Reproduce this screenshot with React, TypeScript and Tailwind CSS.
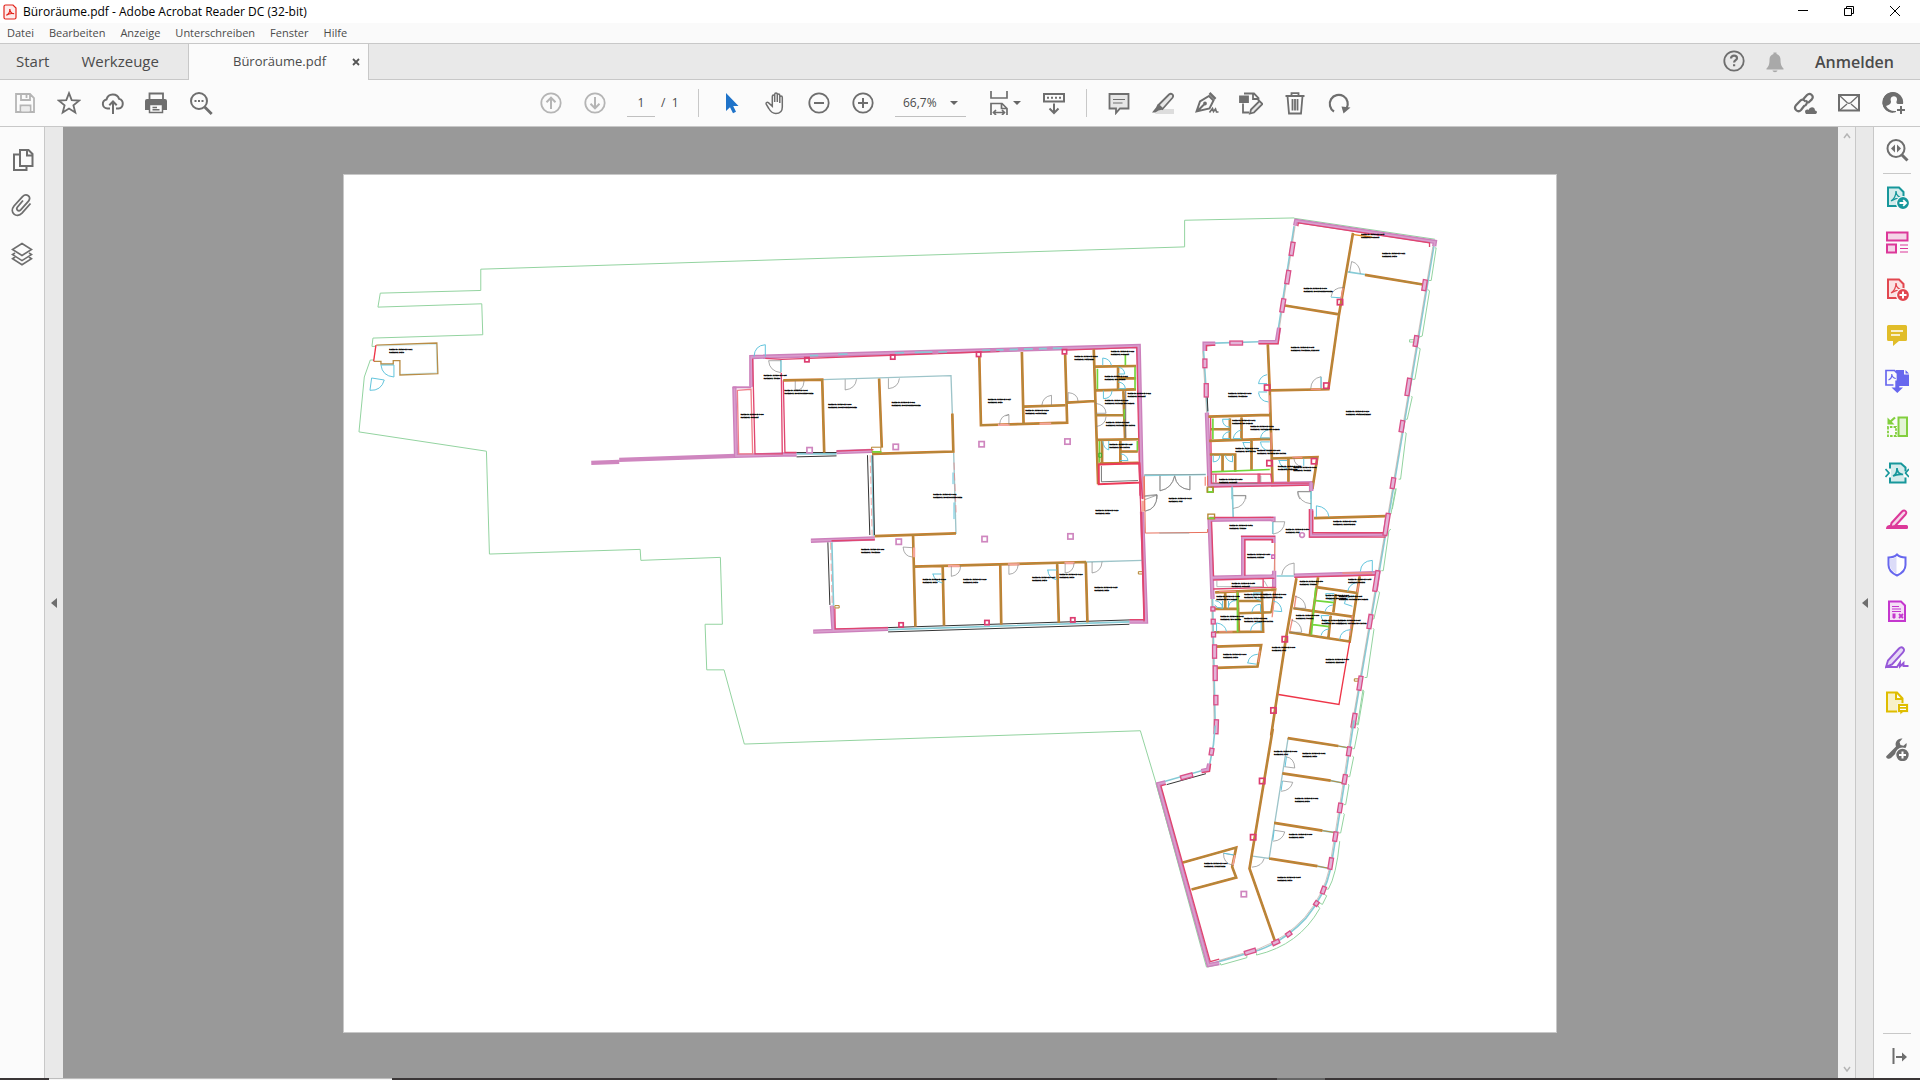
import React from "react";

type IconProps = { children: React.ReactNode; className?: string };
const Icon: React.FC<IconProps> = ({ children, className = "text-[#6e6e6e]" }) => (
  <svg viewBox="0 0 24 24" className={`h-6 w-6 shrink-0 ${className}`} fill="none" stroke="currentColor" strokeWidth="1.8" aria-hidden="true">{children}</svg>
);

type ToolProps = { label: string; children: React.ReactNode; className?: string };
const Tool: React.FC<ToolProps> = ({ label, children, className = "w-11" }) => (
  <button type="button" aria-label={label} className={`flex h-full shrink-0 items-center justify-center ${className}`}>{children}</button>
);

const SideTool: React.FC<ToolProps> = ({ label, children }) => (
  <button type="button" aria-label={label} className="flex h-[46px] w-full shrink-0 items-center justify-center">{children}</button>
);

const swoosh = "M6 16c3-2 5-6 5-10c0 4 3 7 7 7c-5-.5-8 .5-12 3z";

const menus = ["Datei", "Bearbeiten", "Anzeige", "Unterschreiben", "Fenster", "Hilfe"];

const TitleBar = () => (
  <header className="flex h-[23px] shrink-0 items-center bg-white text-black">
    <svg viewBox="0 0 14 16" className="ml-[3px] h-4 w-3.5" aria-hidden="true">
      <path d="M2.500 1h7.500l3 3v9.500a1.500 1.500 0 0 1-1.500 1.500h-9a1.500 1.500 0 0 1-1.500-1.500v-11a1.500 1.500 0 0 1 1.500-1.500z" fill="#fdecec" stroke="#e2231a" strokeWidth="1.200" />
      <path d="M3.300 11.300c2-.8 3.700-3.600 3.500-6.300c.2 2.700 2 4.700 4.300 4.700c-3-.6-5.500 0-7.800 1.600z" fill="none" stroke="#e2231a" strokeWidth="1.200" />
    </svg>
    <h1 className="ml-1.5 text-[12px] leading-4">Büroräume.pdf - Adobe Acrobat Reader DC (32-bit)</h1>
    <div className="ml-auto flex h-full pr-0.5">
      <Tool label="Minimieren" className="w-[46px]"><svg className="h-3 w-3" viewBox="0 0 12 12" stroke="#000"><path d="M1 4.500h10" /></svg></Tool>
      <Tool label="Wiederherstellen" className="w-[46px]"><svg className="h-3 w-3" viewBox="0 0 12 12" stroke="#000" fill="none"><path d="M1.500 2.500h7v7h-7zM3.500 2V.5h7v7H9" /></svg></Tool>
      <Tool label="Schließen" className="w-[46px]"><svg className="h-3 w-3" viewBox="0 0 12 12" stroke="#000"><path d="M1 0l10 10M11 0L1 10" /></svg></Tool>
    </div>
  </header>
);

const TabBar = () => (
  <div className="flex h-[37px] shrink-0 border-t border-[#c8c8c8] bg-[#e9e9e9] text-[#4b4b4b]">
    <div className="flex w-[188px] items-center gap-8 border-b border-[#c8c8c8] pl-4 text-[15px]">
      <button type="button">Start</button>
      <button type="button">Werkzeuge</button>
    </div>
    <div className="flex w-[181px] items-center border-x border-[#c8c8c8] bg-[#fbfbfb] pl-11 text-[13px]">
      <span>Büroräume.pdf</span>
      <button type="button" aria-label="Tab schließen" className="ml-auto mr-2">
        <svg viewBox="0 0 8 8" className="h-2 w-2" stroke="#555" strokeWidth="1.800"><path d="M1 1l6 6M7 1L1 7" /></svg>
      </button>
    </div>
    <div className="flex flex-1 items-center justify-end border-b border-[#c8c8c8] pr-[26px]">
      <button type="button" aria-label="Hilfe">
        <Icon><circle cx="12" cy="11" r="9.700" /><path d="M9 8.600c0-4 6-3.600 6-.4c0 2-2.900 2-2.900 4.300M12.100 14.200v2" strokeWidth="2.200" /></Icon>
      </button>
      <button type="button" aria-label="Benachrichtigungen" className="ml-[17px]">
        <Icon className="text-[#a9a9a9]"><path fill="currentColor" stroke="none" d="M10.500 2.500h3v1.500c3 .9 4 3 4 5.500c0 5 1 7 3 9v1h-17v-1c2-2 3-4 3-9c0-2.500 1-4.600 4-5.500zM9.500 20.500h5c-.5 2.300-4.500 2.300-5 0z" /></Icon>
      </button>
      <button type="button" className="ml-7 text-[16px] font-semibold">Anmelden</button>
    </div>
  </div>
);

const Toolbar = () => (
  <div className="flex h-[47px] shrink-0 items-center border-b border-[#c8c8c8] bg-[#fbfbfb] text-[#4b4b4b]">
    <div className="flex h-full w-[529px] shrink-0 pl-[3px]">
      <Tool label="Speichern"><Icon className="text-[#b5b5b5]"><path d="M3 3h14l4 4v14H3zM8 3v6h9V3M13.500 4v3M7.500 21v-6.500h10V21" /><path d="M8.500 15.500h8v5h-8z" fill="#ececec" stroke="none" /></Icon></Tool>
      <Tool label="Favorit"><Icon><path d="M12 2.200l2.700 6.900 7.400.5-5.700 4.700 1.900 7.300L12 17.600l-6.300 4 1.900-7.300-5.700-4.700 7.400-.5z" /></Icon></Tool>
      <Tool label="Hochladen"><Icon><path d="M9 17.500H6.500a4.600 4.600 0 0 1-1-9.100a6.600 6.600 0 0 1 12.600-.5a4.900 4.900 0 0 1-.6 9.600H15M12 23V11M8.300 14.200L12 10.500l3.700 3.700" strokeWidth="2" /></Icon></Tool>
      <Tool label="Drucken"><Icon><path d="M4.500 8.500V2.500h13.500v6" /><path d="M2 8h18a2 2 0 0 1 2 2v9h-4v-5H4v5H0v-9a2 2 0 0 1 2-2z" fill="currentColor" stroke="none" /><path d="M4.500 13.500h13v8h-13zM7.500 16.500h4.500M7.500 18.800h7" strokeWidth="1.500" /></Icon></Tool>
      <Tool label="Suchen"><Icon><circle cx="10" cy="10" r="8" strokeWidth="2" /><path d="M15.700 16l7 7" strokeWidth="2.800" /><path d="M5.500 10h2M9 10h2M12.500 10h2" strokeWidth="2" /></Icon></Tool>
    </div>
    <Tool label="Vorherige Seite"><Icon className="text-[#b5b5b5]"><circle cx="12" cy="12" r="9.700" /><path d="M12 18V7M7.500 11.200L12 6.700l4.500 4.500" strokeWidth="2" /></Icon></Tool>
    <Tool label="Nächste Seite"><Icon className="text-[#b5b5b5]"><circle cx="12" cy="12" r="9.700" /><path d="M12 6v11M7.500 12.800l4.500 4.500 4.500-4.500" strokeWidth="2" /></Icon></Tool>
    <input aria-label="Seite" defaultValue="1" className="ml-2.5 h-7 w-7 border-b border-[#c0c0c0] bg-transparent text-center text-[12px]" />
    <span className="ml-1.5 w-5 whitespace-nowrap text-[12px]">/&nbsp; 1</span>
    <div className="ml-[17px] mr-2.5 h-7 w-px bg-[#c8c8c8]" />
    <Tool label="Auswahl"><Icon className="text-[#1f73c9]"><path d="M7 2v18l4-3.800 3 6 3-1.500-2.800-5.700H19.500z" fill="currentColor" stroke="none" /></Icon></Tool>
    <Tool label="Hand"><Icon><path d="M8.300 13V5.500c0-2 2.400-2 2.400 0V11V3.500c0-2 2.600-2 2.600 0V11V4.500c0-2 2.500-2 2.500 0V12V6.500c0-2 2.500-2 2.500 0V16c0 4.500-2.500 6.500-6.500 6.500c-4 0-5.300-2-7-5l-2.600-4.300c-.6-1.200.8-2.400 2.200-1.500l3.900 3.600z" strokeWidth="1.500" transform="translate(1 0)" /></Icon></Tool>
    <Tool label="Verkleinern"><Icon><circle cx="12" cy="12" r="9.700" /><path d="M7 12h10" strokeWidth="2" /></Icon></Tool>
    <Tool label="Vergrößern"><Icon><circle cx="12" cy="12" r="9.700" /><path d="M7 12h10M12 7v10" strokeWidth="2" /></Icon></Tool>
    <div className="ml-2.5 flex h-7 w-[71px] items-center border-b border-[#c0c0c0]">
      <select aria-label="Zoom" className="flex-1 appearance-none bg-transparent pl-2 text-[12px]"><option>66,7%</option></select>
      <svg viewBox="0 0 8 4" className="mr-2 h-1 w-2" fill="#666"><path d="M0 0h8L4 4z" /></svg>
    </div>
    <Tool label="Seitenanzeige" className="ml-5 w-9">
      <Icon><path d="M4 0v7h16V0M4 24V12.500h11l5 5V24M14.500 12.500v5H20M7 21.500h10M9 19l-2.500 2.500L9 24M15 19l2.500 2.500L15 24" strokeWidth="1.700" /></Icon>
      <svg viewBox="0 0 8 4" className="ml-0.5 h-1 w-2" fill="#666"><path d="M0 0h8L4 4z" /></svg>
    </Tool>
    <Tool label="Tastatur" className="ml-2.5 w-11"><Icon><path d="M2 3h20v7.500H2zM5 6.800h2M9 6.800h2M13 6.800h2M17 6.800h2M12 12.500v9M7.500 17.500L12 22l4.500-4.500" strokeWidth="2" /></Icon></Tool>
    <div className="mx-2.5 h-7 w-px bg-[#c8c8c8]" />
    <Tool label="Kommentar"><Icon><path d="M2.500 3h19v14.500H13L9 22v-4.500H2.500z" fill="#e6e6e6" /><path d="M6 8.500h12M6 12h9.500" strokeWidth="1.200" /></Icon></Tool>
    <Tool label="Markieren"><Icon><path d="M8 18h15v5H4z" fill="#ddd" stroke="none" /><path d="M7.500 14L18 3.500c2.500-2 5.300.8 3.500 3.300L11.500 18z" fill="#e6e6e6" /><path d="M6.500 13.500l5.500 5-4.500 1-3 2H1l4-5z" fill="currentColor" stroke="none" /></Icon></Tool>
    <Tool label="Unterschreiben"><Icon><path d="M14.500 2l6 6" strokeWidth="2.500" /><path d="M1.500 20.500l3.500-10 9-5.500L18.500 9.500l-4 8zM2 20.500l7-7" strokeWidth="2" /><circle cx="10" cy="12.500" r="1" fill="currentColor" /><path d="M14.500 21.500l3-4 1 3 2-2.500 1 3h2" strokeWidth="1.600" /></Icon></Tool>
    <Tool label="Bearbeiten"><Icon><path d="M5 2.500h10l4.500 4.500v3M14 2.500V8h5.500M4 12.500v9h6" /><path d="M1 5.500h8v5.500H1z" fill="currentColor" /><path d="M11 22.500l1-4L20.500 10l3 3L15 21.500z" fill="#e6e6e6" /></Icon></Tool>
    <Tool label="Löschen"><Icon><path d="M2.500 5h19M8.500 5V2.200h7V5M4.500 5l1.500 17.500h12L19.500 5M9.500 8v11.500M12 8v11.500M14.500 8v11.500" /></Icon></Tool>
    <Tool label="Drehen"><Icon><path d="M7 20.500a9 9 0 1 1 12.500-3" strokeWidth="2.200" /><path d="M14.500 15.500l9 1-7 6z" fill="currentColor" stroke="none" /></Icon></Tool>
    <div className="ml-auto flex h-full pr-[5px]">
      <Tool label="Link teilen"><Icon><path d="M9.500 9l4.500-5c3-3 7.500 1 4.800 4.400L15 12M13 9.500c2.500 2.500 0 4-1 5.500M11.500 14.500l-3.500 4.500c-3 3-8-.7-5-4.800l4.500-4.700c1.500-1.300 3.500-1 5 1" strokeWidth="2.200" /><path d="M13 23c-2.500-3 .5-5.500 2.500-4c1.500-4 6.500-3.500 6.500.5c2.500 0 2.500 3 .5 3.500z" fill="currentColor" stroke="none" /></Icon></Tool>
      <Tool label="E-Mail"><Icon><path d="M2 4h20v15.500H2z" strokeWidth="2" /><path d="M2.500 4.500l7.500 7c1.500 1.300 2.500 1.300 4 0l7.500-7M3 19l7-6M21 19l-7-6" strokeWidth="1.300" /></Icon></Tool>
      <Tool label="Konto"><Icon><path d="M15 21a10.300 10.300 0 1 1 7-8h-5c-2-.5-1.500-1.500-1.500-2.500c3-7-8-7-5.500 0c0 2-1 3-5 4.500c2 4 6 5.500 10 5z" fill="currentColor" stroke="none" /><circle cx="11.500" cy="11.500" r="9.500" strokeWidth="1.300" strokeDasharray="42 18" transform="rotate(85 11.500 11.500)" /><path d="M20 15v8M16 19h8" strokeWidth="2" /></Icon></Tool>
    </div>
  </div>
);

const LeftPane = () => (
  <nav aria-label="Navigation" className="flex w-[45px] shrink-0 flex-col items-center border-r border-[#c8c8c8] bg-[#fbfbfb] pt-2.5">
    <SideTool label="Seiten"><Icon><path d="M10 2h8.500l4 4v12H10zM17 2v5.500h5.500M10 6.500H4V22h12.500v-4" strokeWidth="2" /></Icon></SideTool>
    <SideTool label="Anlagen"><Icon><path d="M13 6.500L7.500 13c-2 2.700 1 5 3.200 2.800l7.800-8.600c3.600-4.600-2.200-8.400-6-4.500L4 12c-5 6.500 2.500 12.700 8 7.200l8.500-9.700" /></Icon></SideTool>
    <SideTool label="Ebenen"><Icon className="mt-1 text-[#6e6e6e]"><path d="M12 1.500l9.500 6-9.500 6-9.500-6zM5 11l-2.500 1.600 9.500 6 9.500-6L19 11M5 15l-2.500 1.800 9.500 6 9.500-6L19 15" strokeWidth="1.600" /></Icon></SideTool>
  </nav>
);

const RightPane = () => (
  <aside aria-label="Werkzeuge" className="flex w-[47px] shrink-0 flex-col items-center border-l border-[#c8c8c8] bg-[#fbfbfb]">
    <SideTool label="Werkzeug suchen"><Icon><circle cx="11" cy="10.500" r="8.500" strokeWidth="2" /><path d="M17 17l5.500 5.500" strokeWidth="3" /><path d="M10 6.500v8L6 10.500zM12 6.500v8l4-4z" fill="currentColor" stroke="none" /></Icon></SideTool>
    <div className="h-px w-7 shrink-0 bg-[#c8c8c8]" />
    <SideTool label="PDF exportieren"><Icon className="text-[#17979b]"><path d="M3 2.500h11l4.500 4.500v14H3z" fill="#d5ecec" strokeWidth="2" /><path d={swoosh} strokeWidth="1.300" /><circle cx="18" cy="18" r="6.500" fill="currentColor" stroke="#fbfbfb" strokeWidth="1.200" /><path d="M14.500 18h6M18.200 15.200L21 18l-2.800 2.800" stroke="#fff" /></Icon></SideTool>
    <SideTool label="Seiten verwalten"><Icon className="text-[#dc3899]"><path d="M2 1.500h20.500v8H2zM2 13.500h9v8H2z" fill="#f5d5e8" strokeWidth="2" /><path d="M15 14h8M15 17.500h8M15 21h8" strokeWidth="1.200" /></Icon></SideTool>
    <SideTool label="PDF erstellen"><Icon className="text-[#e2474f]"><path d="M3 2.500h11l4.500 4.500v14H3z" fill="#fbe3e3" strokeWidth="2" /><path d={swoosh} strokeWidth="1.300" /><circle cx="18" cy="18" r="6.500" fill="currentColor" stroke="#fbfbfb" strokeWidth="1.200" /><path d="M14.500 18h7M18 14.500v7" stroke="#fff" strokeWidth="2" /></Icon></SideTool>
    <SideTool label="Kommentieren"><Icon className="text-[#e1bd29]"><path d="M2 3.500a1.500 1.500 0 0 1 1.500-1.500h17a1.500 1.500 0 0 1 1.500 1.500v13a1.500 1.500 0 0 1-1.500 1.500H14l-6 5v-5H3.500A1.500 1.500 0 0 1 2 16.500z" fill="currentColor" stroke="none" /><path d="M6 8h12M6 12h9" stroke="#fff" strokeWidth="1.500" /></Icon></SideTool>
    <SideTool label="Dateien zusammenführen"><Icon className="text-[#6767ee]"><path d="M11 1h8v4.500h5V17H11zM20.500 1v3.500H24z" fill="currentColor" stroke="none" /><path d="M8.500 16H1V1.500h8.500l3 3V13" fill="#fbfbfb" strokeWidth="1.700" /><path d="M3.500 11c2-.8 3.500-3 3.300-6c.3 3 1.500 4.300 4 4.500" strokeWidth="1.200" /><path d="M10.300 11.500h4v7H18L12.300 24 6.500 18.500h3.800z" fill="currentColor" stroke="none" /></Icon></SideTool>
    <SideTool label="Seiten organisieren"><Icon className="text-[#82cf3e]"><path d="M13.500 2.500h8.500v18.500h-8.500z" fill="#e3f4d5" strokeWidth="2" /><path d="M3 12v9h8v-9z" strokeDasharray="2.500 1.200" /><path d="M10 2.500L5.500 6.500" strokeWidth="2.200" /><path d="M2.500 2.500v7H9.500z" fill="currentColor" stroke="none" /></Icon></SideTool>
    <SideTool label="PDF komprimieren"><Icon className="text-[#17979b]"><path d="M5 7.500V2.500h11l4.500 4v4M5 16.500v5h15.500v-5" fill="#d5ecec" strokeWidth="2" /><path d="M6 7h13v10H6z" fill="#d5ecec" stroke="none" /><path d="M8 15c2.500-1 4-4 4-8c0 4 2 6 6 6.500c-5-.5-7 0-10 1.500zM.5 8L4 12l-3.500 4M24 8l-3.500 4 3.500 4" strokeWidth="1.700" /></Icon></SideTool>
    <SideTool label="Schwärzen"><Icon className="text-[#dc3899]"><path d="M1 22c0-4 3-4 5-4h15.500q1.500 0 1.500 1.500V21q0 1-1.500 1z" fill="currentColor" stroke="none" /><path d="M6.500 16L17 4.500c2.500-2.500 5.800.5 3.500 3L10 19l-4.500 1z" fill="#f5d5e8" strokeWidth="2" /></Icon></SideTool>
    <SideTool label="Schützen"><Icon className="text-[#6767ee]"><path d="M12 1.500c2 2 5 3 8.500 3V12c0 5-4 8.500-8.500 10.500C7.500 20.500 3.500 17 3.500 12V4.500c3.500 0 6.500-1 8.500-3z" fill="#fff" strokeWidth="2" /><path d="M11.500 3.500v17C7.500 18.500 5 15.500 5 12V6c2.500-.3 5-1 6.500-2.500z" fill="#dcdcf8" stroke="none" /></Icon></SideTool>
    <SideTool label="Formular vorbereiten"><Icon className="text-[#c437ce]"><path d="M4 2.500h12l4 4V22H4z" fill="#f5dff6" strokeWidth="2" /><path d="M7 7.500h7M7 10h9M7 12.500h9" strokeWidth="1.200" /><path d="M7.500 14.500h3v4l-1.500 1.500-1.500-1.500z" fill="currentColor" stroke="none" /><path d="M14 15l4 4M18 15l-4 4" /></Icon></SideTool>
    <SideTool label="Ausfüllen und unterschreiben"><Icon className="text-[#9658d8]"><path d="M1 22l2-6.500L14 3.500c3-3 7 1 4 3.800L7 19.500 1 22z" fill="#e6d8f6" strokeWidth="1.900" /><path d="M1 22h11l3-4.500v4l3.500-3.500v3h5" strokeWidth="1.900" /></Icon></SideTool>
    <SideTool label="Zur Kommentierung senden"><Icon className="text-[#dfbd00]"><path d="M2 1.500h10l5.500 6v13H2zM11 2v6h6" fill="#f8f1c8" strokeWidth="2" /><path d="M12.500 12.500H23.500v9H18l-3 2.500v-2.500h-2.500z" fill="currentColor" stroke="#fbfbfb" strokeWidth=".8" /><path d="M15 15.500h6M15 18.300h6" stroke="#fff" strokeWidth="1.200" /></Icon></SideTool>
    <SideTool label="Weitere Werkzeuge"><Icon><path d="M1.500 19L11 9.500C9.500 5 12.500 1 17.500 1.500L14.500 5l1 3 3 .8L21.500 6c1 4.500-2.500 7.500-7 6.800L6 21c-2.500 2-6-.5-4.500-2z" fill="currentColor" stroke="none" /><circle cx="17.500" cy="18" r="6.800" fill="currentColor" stroke="#fbfbfb" strokeWidth="1.200" /><path d="M14 18h7M17.500 14.500v7" stroke="#fff" strokeWidth="2" /></Icon></SideTool>
    <div className="mt-auto h-px w-7 shrink-0 bg-[#c8c8c8]" />
    <button type="button" aria-label="Bereich ausblenden" className="flex h-11 w-full shrink-0 items-center justify-center pl-1.5"><Icon><path d="M5.500 4v16M8 13h9" strokeWidth="2" /><path d="M14 8.500l5 4.500-5 4.500z" fill="currentColor" stroke="none" /></Icon></button>
  </aside>
);

type LineKind = "site" | "wall" | "core" | "glass" | "lime" | "door" | "swing" | "red" | "black";
const colors: Record<LineKind, [string, number]> = {
  site: ["#93d3a0", 3],
  wall: ["#cf86bf", 11],
  core: ["#e0456f", 4],
  glass: ["#86cbd6", 5],
  lime: ["#72d63a", 5],
  door: ["#808080", 2],
  swing: ["#62c4dc", 3],
  red: ["#ee3548", 4],
  black: ["#333333", 3],
};

const Line = ({ kind, d }: { kind: LineKind; d: string }) => <path d={d} stroke={colors[kind][0]} strokeWidth={colors[kind][1]} />;

// drywall: orange edges with an olive core
const Drywall = ({ d }: { d: string }) => (
  <>
    <path d={d} stroke="#cf7a2c" strokeWidth="8" />
    <path d={d} stroke="#ac8b3f" strokeWidth="4" />
  </>
);

// exterior wall with a lighter filling
const Outer = ({ d }: { d: string }) => (
  <>
    <path d={d} stroke="#cc80bc" strokeWidth="13" />
    <path d={d} stroke="#d99dcd" strokeWidth="5" />
  </>
);

const Columns = ({ at, stroke = "#cf86bf", size = 16 }: { at: number[][]; stroke?: string; size?: number }) => (
  <>{at.map(([x, y]) => <rect key={`${x}-${y}`} x={x - size / 2} y={y - size / 2} width={size} height={size} stroke={stroke} strokeWidth="5" />)}</>
);

// window piers: x, y, height, rotation
const Piers = ({ at }: { at: number[][] }) => (
  <>
    {at.map(([x, y, h, r]) => (
      <g key={`${x}-${y}`} transform={`translate(${x} ${y}) rotate(${r})`}>
        <rect x={-6} y={-h / 2} width={12} height={h} fill="#e3b4d8" stroke="#da5088" strokeWidth="4" />
      </g>
    ))}
  </>
);

type RoomLabel = [number, number, string, string];
const Labels = ({ rooms }: { rooms: RoomLabel[] }) => (
  <g fontSize="6" fontWeight="700" fill="#000" stroke="#000" strokeWidth="1" fontFamily="Liberation Sans, sans-serif">
    {rooms.map(([x, y, id, name]) => (
      <text key={id} x={x} y={y}>
        <tspan>{`Raum-ID: RUB/3-E-4-${id}`}</tspan>
        <tspan x={x} dy={9}>{`Raumbez: ${name}`}</tspan>
      </text>
    ))}
  </g>
);

const SitePlan = () => (
  <g transform="translate(1020 600)">
    <Line kind="site" d="M2865 55L2536 62V142L421 209V273L119 281L112 323L424 313L427 406L97 416L94 441h10M100 482H89L71 533L55 698L438 756L447 1065L900 1051L902 1084L1141 1075L1147 1276H1095L1100 1413H1152L1213 1636L2403 1596L2450 1753L2602 2307" />
    <path d="M107 437L289 431L292 523L178 527V484H158V494H121V486H100" stroke="#b98c45" strokeWidth="4" />
    <path d="M110 440L287 435L289 520L182 524" stroke="#86cbd6" strokeWidth="1" />
    <Line kind="red" d="M106 437L99 486" />
    <Line kind="swing" d="M121 497H160V533Q125 530 121 497M93 536L131 542Q122 575 88 573Z" />
    <path d="M753 791L837 788M837 782L1187 770" stroke="#cf86bf" strokeWidth="13" />
    <Labels rooms={[[146, 453, "001", "Büro"]]} />
  </g>
);

const WestWing = () => (
  <g transform="translate(2160 990)">
    <Outer d="M94 172V83L1258 50L1268 508M1268 548L1280 878H1230M43 172L48 380L192 376H230M350 369L457 365M273 635L465 628M336 830L341 905M280 908L505 900" />
    <path d="M94 174H38" stroke="#cc80bc" strokeWidth="6" />
    <Line kind="core" d="M98 88L105 374H187L184 130M136 87L185 90L780 68L840 66M1040 62L1252 54L1262 500M190 153L195 370H230M350 366L461 361M335 635L465 632M345 838L346 900L505 896M1267 548L1275 872H1230" />
    <path d="M52 183L93 180L98 374H56Z" stroke="#f0808a" strokeWidth="4" />
    <Line kind="glass" d="M183 92V128M270 79l25-1M355 75l28-1M525 71l28-1M585 69l55-1M655 68l27-1M788 63L1028 56M456 378L462 620M336 640L341 830M505 902L1230 879M230 374H350" />
    <path d="M812 63l18-1M852 61l18-1M895 60l18-1M940 59l18-1M982 57l18-1M638 69h18" stroke="#cf86bf" strokeWidth="9" />
    <path d="M307 151L694 139L698 253M702 370L709 615M1100 699L1270 694" stroke="#9dc4c9" strokeWidth="4" />
    <path d="M451 378L457 620M332 640L337 828M703 400L710 560" stroke="#ee8080" strokeWidth="2" strokeDasharray="22 10" />
    <Line kind="black" d="M443 378L450 618M459 378L464 618M324 640L330 828M505 909L1230 886M505 896L1230 873M230 383L350 380M230 370H350" />
    <Drywall d="M190 153L307 151L313 370M478 148L486 355M698 253L701 367L457 374M465 621L709 613M779 80L784 288L1043 280L1037 75M907 68L912 283M912 232L1037 228M1123 60L1136 465M1043 220L1128 215M1128 112L1250 110M1130 183L1250 180M1130 258H1212M1212 183L1217 328M1130 332L1258 330M1140 403L1258 401M1148 335V400M1203 335V400M1203 367H1255M1196 112V180M1196 147H1250M580 620L587 893M580 713L1100 699M669 712L673 890M842 707L845 887M1013 703L1018 882M1099 700L1104 880" />
    <path d="M455 354h28v18h-25zM345 830h13v7h-13zM1257 728h13v7h-13z" stroke="#b5842e" strokeWidth="3" />
    <Line kind="lime" d="M457 368h28M1218 75V108M1247 112V180M1134 118V180M1140 335V400M1215 240V270M1254 335V365" />
    <path d="M1138 372h8v12h-8z" stroke="#3fae2a" strokeWidth="3" />
    <path d="M1138 406L1260 402L1262 460L1138 465Z" stroke="#ec3a58" strokeWidth="6" />
    <path d="M1146 410V458L1256 454M1219 185V325" stroke="#777" strokeWidth="3" />
    <path d="M583 655V685M835 287h35M960 283h35M685 711h35M865 706h35M1035 702h30M1270 515V548" stroke="#f4a59a" strokeWidth="7" />
    <Line kind="door" d="M183 94H146Q148 125 183 130M252 153V158Q250 185 226 182V155M376 150V182Q407 178 410 150M506 147V178Q536 175 539 147M868 286V256Q842 258 840 286M868 256l-10 4M996 228V198Q970 202 967 228M1046 218V190Q1074 192 1076 216M578 656L550 654Q552 682 578 684M1128 222Q1158 226 1160 252H1130M1130 292Q1158 288 1160 262M695 712V742Q722 738 723 711M868 707V736Q894 734 896 706M1037 703V732Q1062 730 1064 702M1118 699V732Q1146 728 1148 698M1275 512L1313 498Q1314 540 1277 546" />
    <Line kind="swing" d="M136 82V46Q104 48 102 82M1150 108V86Q1172 88 1176 108M1196 134H1216Q1214 116 1198 114M1196 158Q1216 160 1218 178H1198M1152 184V208Q1176 208 1178 184M1150 335Q1152 358 1168 362V335M1202 394H1226Q1222 376 1204 374M1204 345h20M638 735H665M640 735Q644 756 668 762M983 723H1012M985 723Q986 748 1012 752M700 430V465M703 520V570" />
    <Columns at={[[528, 353], [786, 345], [1044, 337], [537, 638], [795, 630], [1053, 622], [269, 363]]} />
    <Columns at={[[261, 91], [519, 83], [777, 75], [1035, 67], [544, 888], [802, 881], [1060, 873]]} stroke="#dc3c70" size={13} />
    <Labels rooms={[
      [131, 139, "035", "Treppe"], [62, 257, "036", "Schacht"], [194, 185, "034", "Besprechungsraum"], [325, 227, "033", "Besprechungsraum"],
      [516, 221, "032", "Besprechungsraum"], [641, 498, "031", "Besprechungsraum"], [805, 212, "017", "Büro"], [918, 245, "018", "Serverraum"],
      [1065, 84, "019", "Putzraum"], [1175, 69, "020", "Schacht"], [1156, 144, "021", "WC Damen"], [1225, 194, "022", "Schacht"],
      [1157, 215, "023", "Vorraum WC Damen"], [1160, 281, "024", "Vorraum WC Herren"], [1170, 347, "025", "WC Herren"], [1128, 546, "016", "Büro"],
      [424, 662, "030", "Teeküche"], [609, 752, "029", "Büro"], [731, 752, "028", "Büro"], [938, 747, "027", "Büro"], [1020, 738, "026", "Büro"], [1125, 776, "015", "Büro"],
    ]} />
  </g>
);

const NorthWing = () => (
  <g transform="translate(3420 600)">
    <Line kind="site" d="M465 56L888 119M888 145h4L877 243h-8M866 270l6 4L850 410l-9 3M838 445l6 3L828 540h-8M817 590l3 3L805 660h-6M798 700l4 2L785 840h-6M772 868L760 930M826 421h-14v7h14" />
    <Line kind="glass" d="M465 80L412 425M225 431L360 427M193 455L205 640M885 140L758 900M14 829L200 826M279 862V900M516 872V900M626 217L678 225" />
    <path d="M882 140L755 900M468 80L415 425M190 455L202 640" stroke="#bda7a0" strokeWidth="2" />
    <Outer d="M468 78L471 64L888 127L886 140M420 385L413 428H358M228 433L196 433V455M203 640L211 858L518 852L516 875" />
    <Line kind="core" d="M476 80L478 70L872 130V142M423 385L417 433H358M228 437L202 439V455M214 650L217 852H512V875M0 790L10 900M214 864L518 858" />
    <Drywall d="M642 100L600 345L568 570L395 573M386 435L392 575L398 775M678 226L852 255M437 318L600 345M208 652L392 647M307 655V720M210 725L395 719M337 722V815M272 658V720M215 690H272M212 766H288V818M250 766V818M395 778L535 774L520 870M448 778V848M398 775L400 850" />
    <path d="M645 105L700 113" stroke="#e08a1e" strokeWidth="4" />
    <Line kind="lime" d="M218 818L392 811M221 658V720M205 866V878H221V864" />
    <Line kind="core" d="M215 825H395L398 850M230 825V850M357 822V850M362 822V850" />
    <path d="M222 825V853H355M365 830V850" stroke="#888" strokeWidth="2" />
    <path d="M612 265L606 300M391 588V640M396 700V760M515 570h30M460 775h30M12 833L14 900M198 833V860" stroke="#f08f80" strokeWidth="4" />
    <Line kind="black" d="M204 592L206 636" />
    <Line kind="door" d="M632 218L638 186Q662 192 664 222M614 264Q580 264 576 292M546 568V532Q516 538 515 568M62 830V875Q98 868 106 830Q112 868 152 872V830M282 890H320V900M516 878H476V886L482 900M15 890L53 886V900M464 775Q466 800 490 802" />
    <Line kind="swing" d="M576 293L605 295M546 533V566M384 526Q362 530 358 553H384M358 578H384M358 580Q362 606 388 608M272 660H250Q250 682 272 684M272 697Q252 700 250 718H272M306 692Q286 698 282 718H306M392 690Q368 695 364 716H392M310 730H334M312 730Q316 752 336 756M392 728H364Q366 752 394 756M222 768V788Q240 788 242 768M258 768Q262 786 280 788V768M418 784H444M420 784Q424 806 446 808M494 778V800" />
    <Piers at={[[459, 148, 40, 9], [446, 233, 40, 9], [431, 318, 40, 9], [291, 431, 38, 90], [197, 492, 26, 0], [201, 573, 40, 0], [857, 257, 32, 9], [831, 425, 32, 9], [808, 563, 52, 9], [789, 681, 34, 9], [762, 852, 32, 9]]} />
    <Columns at={[[603, 308], [562, 559], [384, 565], [391, 792], [525, 786]]} stroke="#dc3c70" />
    <Labels rooms={[
      [667, 107, "047", "Schacht"], [730, 164, "011", "Büro"], [494, 269, "046", "Besprechungsraum"], [456, 446, "045", "Teeküche, Kopierer"], [267, 584, "040", "Teeküche"],
      [621, 638, "013", "Stationszimmer"], [279, 666, "041", "WC Damen"], [334, 683, "042", "Vorraum WC Damen"], [289, 749, "043", "WC Herren"], [354, 756, "044", "Vorraum WC Herren"],
      [417, 803, "048", "Putzraum"], [463, 806, "049", "Technik"], [240, 842, "050", "Schacht"], [88, 901, "014", "Flur"],
    ]} />
  </g>
);

const CentralCore = () => (
  <g transform="translate(3420 1350)">
    <Line kind="site" d="M770 118L756 195h-6M756 240l-6 5L733 365h-6M718 428l4 2L705 510h-5M702 538l3 3L684 686h-7M671 724l4 3L658 828h-6" />
    <Line kind="glass" d="M758 150L640 840M279 112L282 205M516 125V180M401 218V255M412 381H465M220 450L228 840" />
    <path d="M755 150L637 840M217 450L225 840M408 281L405 365" stroke="#bda7a0" strokeWidth="2" />
    <Outer d="M516 100V125M516 180V260L738 256L746 195M403 218V209L211 212L220 450M403 282V266H312V382M220 386L408 382M405 365V418M465 380L718 372L710 425" />
    <Line kind="core" d="M211 205H403M217 217L223 382M521 184V251H735M511 180V264H740M317 380V272H400V282M305 262H408M222 393L406 388M222 420L410 415M372 388V415M466 385L712 378M0 40L14 518" />
    <path d="M15 80L18 252L205 250V240M205 80V110M407 282V365M15 150V186" stroke="#e8705c" strokeWidth="3" />
    <path d="M60 252h90M15 76H198M233 395V413H370M375 395L385 413" stroke="#8a9a9a" strokeWidth="2" />
    <Drywall d="M525 207L740 201M472 388L440 572L396 860M228 430L408 422L397 490M295 425L299 550M225 480H300M258 430V480M225 550L372 548L368 425M300 493L397 490M300 456H368M228 593L366 589L355 653L232 657M537 385L512 560M450 550L632 578L662 382M463 478L640 503M590 435L583 490M537 415L655 432M575 500L568 568" />
    <path d="M204 114h18v15h-18zM206 195h20v14h-20z" stroke="#b5842e" strokeWidth="4" />
    <path d="M646 690h12v7h-12z" stroke="#b5842e" strokeWidth="3" />
    <Line kind="lime" d="M206 128h16M208 207h16M530 417L517 558M530 455L585 461M522 527L570 533M295 430V550" />
    <path d="M399 505L408 425M471 440L466 475M460 510L452 548M660 400L655 430M640 500L632 560M362 605L358 640M240 427H290M240 549H280M610 372H700" stroke="#f08f80" strokeWidth="4" />
    <Line kind="red" d="M418 737L600 767L632 578" />
    <Line kind="door" d="M282 139H320Q317 174 282 178M516 127H476Q480 160 516 164M402 218H437Q434 250 402 255M465 378V342Q432 346 428 378M468 442Q498 448 500 478H466M458 514Q486 520 488 550H454M62 80V125Q98 118 106 80Q112 118 152 122V80M15 142L53 138Q52 180 18 186" />
    <Line kind="swing" d="M532 204V170Q566 174 570 204M664 368Q666 336 700 334V368M226 468Q232 478 250 478V456M228 455Q248 458 250 478M268 472Q272 455 290 455M268 478V456M342 432H366M342 434Q344 452 366 454M338 490Q342 466 364 466V490M402 456Q426 460 428 488L404 486M232 548V522Q258 526 262 548M334 546Q338 520 366 520V546M326 642Q330 618 356 616M324 642L352 646M656 400Q630 404 626 428M586 434H560Q560 452 584 454M558 488Q562 470 582 468M646 440Q620 442 616 464L640 472M570 500H546Q548 520 572 522M546 560Q550 542 570 540M602 572Q604 544 636 542" />
    <Piers at={[[743, 226, 66, 9], [712, 396, 62, 9], [693, 518, 42, 9], [663, 703, 42, 9], [645, 815, 42, 9], [221, 480, 12, 0], [222, 518, 14, 0], [223, 557, 14, 0], [226, 608, 40, 0], [228, 673, 44, 0], [230, 754, 28, 0], [231, 834, 42, 2]]} />
    <Columns at={[[437, 571], [403, 785]]} stroke="#dc3c70" />
    <circle cx="489" cy="258" r="7" stroke="#cf86bf" strokeWidth="5" />
    <path d="M398 318h8v10h-8z" stroke="#cc60b0" strokeWidth="4" />
    <Labels rooms={[
      [583, 218, "051", "Hausflächen"], [271, 231, "052", "Treppe"], [440, 242, "053", "Flur"], [324, 318, "054", "Aufzug"], [278, 404, "055", "Schacht"], [482, 398, "056", "Treppe"],
      [628, 393, "057", "Balkon"], [232, 443, "058", "WC Damen"], [315, 438, "059", "WC Damen"], [372, 438, "060", "Putzraum"], [244, 504, "061", "WC Herren"], [315, 509, "062", "Vorraum WC Herren"],
      [471, 500, "063", "Technik"], [560, 441, "064", "WC Damen"], [600, 444, "065", "Vorraum WC Damen"], [548, 516, "066", "WC Herren"], [596, 516, "067", "Vorraum WC Herren"],
      [399, 597, "068", "Flur"], [252, 617, "069", "Büro"], [560, 633, "070", "Empfang"],
    ]} />
  </g>
);

const SouthWing = () => (
  <g transform="translate(3420 2070)">
    <Line kind="site" d="M672 3L656 105h-5M654 116l4 3L646 180h-6M640 202l4 3L632 264h-6M627 287l3 2L620 348h-6M613 374l3 3L605 433h-5M600 457l2 2Q592 560 568 602h-6M556 618l7 4L550 648l-7-4M537 652l5 8Q480 770 352 800V795M323 800v8L245 830l-2-6M50 285L205 836L240 828" />
    <path d="M645 95Q610 330 575 540Q558 620 500 690Q440 755 360 785L210 828" stroke="#86cbd6" strokeWidth="5" />
    <path d="M641 95Q606 330 571 540Q554 618 497 687Q438 750 359 781L240 816" stroke="#bda7a0" strokeWidth="2" />
    <Line kind="glass" d="M228 110Q225 175 208 240L60 283M598 172L630 178M575 276L612 283M550 426L588 432M535 533L570 540" />
    <path d="M447 148L390 510L340 503" stroke="#9dc4c9" strokeWidth="4" />
    <Line kind="black" d="M82 288L200 255" />
    <Outer d="M78 281L57 286L208 830L240 824M186 247L206 243L210 225" />
    <Line kind="core" d="M80 287L65 292L213 820L240 812M188 252L211 248L214 225" />
    <Drywall d="M401 120L331 540L408 760M446 148L598 172M430 254L575 276M405 403L550 426M390 510L535 533M131 522L291 477L279 535L291 567L157 603" />
    <path d="M575 276L612 283M598 172L634 178M550 426L588 432M535 533L574 540" stroke="#b98a3c" strokeWidth="3" />
    <path d="M287 500L281 530" stroke="#f4a59a" strokeWidth="5" />
    <Line kind="door" d="M440 204Q466 208 467 238L436 234M430 277L461 281Q454 306 426 308M405 425L437 430Q430 456 402 458M375 510Q368 534 338 536M284 500L253 494Q252 524 280 530" />
    <Line kind="swing" d="M253 494L284 499M442 204L438 234M430 277L426 306M405 425L401 456" />
    <Piers at={[[217, 189, 20, 9], [142, 263, 36, 75], [630, 188, 26, 9], [617, 272, 28, 9], [603, 358, 28, 9], [589, 444, 28, 9], [575, 525, 34, 9], [553, 605, 22, 20], [532, 645, 14, 35], [449, 737, 16, 55], [410, 762, 22, 65], [333, 790, 34, 73]]} />
    <Columns at={[[369, 277], [342, 446]]} stroke="#dc3c70" />
    <Columns at={[[314, 617]]} />
    <Labels rooms={[[405, 189, "080", "Flur"], [490, 195, "081", "Büro"], [468, 330, "082", "Büro"], [450, 438, "083", "Büro"], [195, 525, "084", "Archivraum"], [415, 570, "085", "Büro"]]} />
  </g>
);

const FloorPlan = () => (
  <svg viewBox="1030 526 3642 2574" className="block h-auto w-full" fill="none" role="img" aria-label="Grundriss">
    <SitePlan />
    <WestWing />
    <NorthWing />
    <CentralCore />
    <SouthWing />
  </svg>
);

const App: React.FC = () => (
  <div className="flex h-screen flex-col overflow-hidden bg-[#fbfbfb] font-['Open_Sans','Noto_Sans',sans-serif]">
    <TitleBar />
    <nav aria-label="Menü" className="flex h-5 shrink-0 items-center gap-[15px] bg-[#fafafa] pl-[7px] text-[11px] text-[#4b4b4b]">
      {menus.map((menu) => <button key={menu} type="button">{menu}</button>)}
    </nav>
    <TabBar />
    <Toolbar />
    <div className="flex min-h-0 flex-1">
      <LeftPane />
      <button type="button" aria-label="Navigation einblenden" className="flex w-[18px] shrink-0 items-center justify-center bg-[#e9e9e9]">
        <svg viewBox="0 0 6 10" className="h-2.5 w-1.5" fill="#6e6e6e"><path d="M6 0v10L0 5z" /></svg>
      </button>
      <main className="flex min-w-0 flex-1 justify-center overflow-hidden bg-[#999999] pr-px pt-[47px]">
        <div className="w-[1214px] max-w-full self-start border border-[#c8c8c8] bg-white"><FloorPlan /></div>
      </main>
      <div className="flex w-[17px] shrink-0 flex-col items-center justify-between bg-[#f0f0f0] py-1.5">
        <svg viewBox="0 0 8 6" className="h-1.5 w-2" fill="none" stroke="#b5b5b5" strokeWidth="1.500"><path d="M1 5l3-4 3 4" /></svg>
        <svg viewBox="0 0 8 6" className="h-1.5 w-2" fill="none" stroke="#b5b5b5" strokeWidth="1.500"><path d="M1 1l3 4 3-4" /></svg>
      </div>
      <button type="button" aria-label="Werkzeuge ausblenden" className="flex w-[18px] shrink-0 items-center justify-center border-l border-[#c8c8c8] bg-[#e9e9e9]">
        <svg viewBox="0 0 6 10" className="h-2.5 w-1.5" fill="#6e6e6e"><path d="M6 0v10L0 5z" /></svg>
      </button>
      <RightPane />
    </div>
    <footer className="flex h-0.5 shrink-0 bg-[#3a3637]">
      <div className="ml-[49px] w-[343px] border-t border-[#bdbdbd] bg-[#f5f5f5]" />
      <div className="ml-auto mr-[595px] w-12 bg-[#666666]" />
    </footer>
  </div>
);

export default App;
